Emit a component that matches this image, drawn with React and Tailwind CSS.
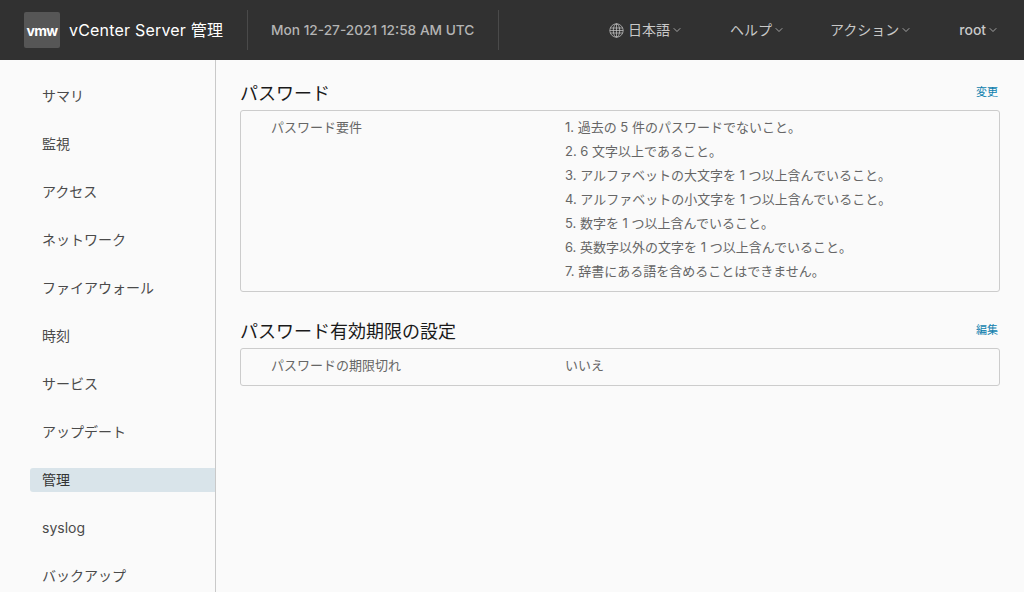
import React from 'react';
import { ChevronDown } from 'lucide-react';

const font = "font-['Inter','Noto_Sans_CJK_JP',sans-serif]";

const sideItems = ['サマリ', '監視', 'アクセス', 'ネットワーク', 'ファイアウォール', '時刻', 'サービス', 'アップデート', '管理', 'syslog', 'バックアップ'];

const rules = [
  '1. 過去の 5 件のパスワードでないこと。',
  '2. 6 文字以上であること。',
  '3. アルファベットの大文字を 1 つ以上含んでいること。',
  '4. アルファベットの小文字を 1 つ以上含んでいること。',
  '5. 数字を 1 つ以上含んでいること。',
  '6. 英数字以外の文字を 1 つ以上含んでいること。',
  '7. 辞書にある語を含めることはできません。',
];

const Globe = () => (
  <svg width="15" height="15" viewBox="0 0 15 15" fill="none" stroke="#c8c8c8" strokeWidth="0.7">
    <circle cx="7.5" cy="7.5" r="6.7" />
    <ellipse cx="7.5" cy="7.5" rx="3.2" ry="6.7" />
    <path d="M7.5 .8v13.4M1.2 5h12.6M1.2 10h12.6M.8 7.5h13.4" />
  </svg>
);

const NavMenu = ({ label, className }) => (
  <div className={`flex items-center gap-[1px] ${className}`}>
    <span>{label}</span>
    <ChevronDown size={12} strokeWidth={1.5} className="text-[#c8c8c8] mt-[1px]" />
  </div>
);

const Section = ({ title, action, children }) => (
  <section>
    <div className="flex justify-between items-center h-[22px] mb-[6px]">
      <h2 className="text-[18px] leading-[22px] text-[#1a1a1a] mt-[2px]">{title}</h2>
      <a className="text-[11px] leading-[22px] text-[#0f7fae] mr-[2px] -mt-[2px]">{action}</a>
    </div>
    {children}
  </section>
);

const App = () => {
  return (
    <div className={`w-[1024px] h-[592px] overflow-hidden flex flex-col bg-[#fafafa] ${font}`}>
      <header className="h-[60px] shrink-0 bg-[#313131] flex items-center pl-6 text-[14px]">
        <div className="w-9 h-9 rounded-[2px] bg-[#565656] flex items-center justify-center text-white font-bold text-[14px] tracking-[-0.7px]">
          vmw
        </div>
        <div className="ml-[9px] text-[16px] tracking-[0.2px] text-white w-[154px] whitespace-nowrap">vCenter Server 管理</div>
        <div className="w-px h-10 bg-[#4a4a4a] ml-[24px]" />
        <div className="ml-[23px] w-[204px] whitespace-nowrap text-[#b4b4b4] font-medium text-[13.7px]">Mon 12-27-2021 12:58 AM UTC</div>
        <div className="w-px h-10 bg-[#4a4a4a] ml-[23px]" />
        <div className="flex items-center text-[#c8c8c8] -mt-[2px]">
          <div className="ml-[110px] mr-[4px] mt-[2px]"><Globe /></div>
          <NavMenu label="日本語" />
          <NavMenu label="ヘルプ" className="ml-[47px]" />
          <NavMenu label="アクション" className="ml-[45px]" />
          <NavMenu label="root" className="ml-[47px] font-medium" />
        </div>
      </header>
      <div className="flex flex-1 min-h-0">
        <nav className="w-[216px] shrink-0 border-r border-[#c9c9c9] pl-[30px] pt-6 text-[14px] text-[#4a4a4a]">
          {sideItems.map(item => (
            <div
              key={item}
              className={`h-6 leading-[23px] pl-3 mb-6 whitespace-nowrap rounded-l-[3px] ${item === '管理' ? 'bg-[#d9e4ea] text-[#333333]' : ''}`}
            >
              {item}
            </div>
          ))}
        </nav>
        <main className="flex-1 pl-6 pr-6 pt-[22px] text-[13px] text-[#666666]">
          <Section title="パスワード" action="変更">
            <div className="border border-[#cccccc] rounded-[3px] h-[182px] pt-[4px] flex">
              <div className="w-[324px] pl-[30px] leading-6">パスワード要件</div>
              <div className="leading-6">
                {rules.map(r => <div key={r} className="whitespace-nowrap">{r}</div>)}
              </div>
            </div>
          </Section>
          <div className="mt-[28px]">
            <Section title="パスワード有効期限の設定" action="編集">
              <div className="border border-[#cccccc] rounded-[3px] h-[38px] pt-[4px] flex">
                <div className="w-[324px] pl-[30px] leading-6">パスワードの期限切れ</div>
                <div className="leading-6">いいえ</div>
              </div>
            </Section>
          </div>
        </main>
      </div>
    </div>
  );
};

export default App;
